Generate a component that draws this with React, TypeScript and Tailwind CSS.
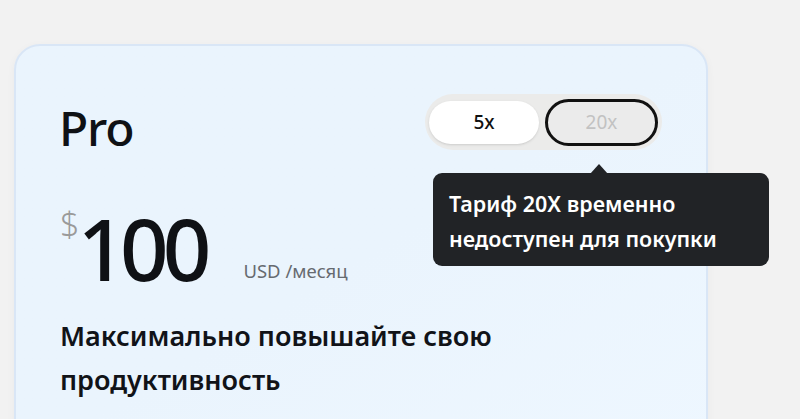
export default function App() {
  return (
    <div
      className="w-[800px] h-[419px] overflow-hidden bg-[#f2f2f2] pt-[44px] pl-[14px]"
      style={{ fontFamily: '"Noto Sans", "Open Sans", sans-serif' }}
    >
      <div className="relative w-[694px] h-[420px] rounded-[26px] border-2 border-[#d9e6f6] bg-gradient-to-br from-[#eaf4fd] via-[#eaf4fd] to-[#eef7ff] shadow-[0_2px_8px_rgba(0,0,0,0.04)] pl-[44px] pt-[52px]">
        <div className="text-[48px] leading-[60px] font-medium text-[#0f1115] tracking-tight -ml-[1px]">Pro</div>

        <div className="absolute left-[409px] top-[48px] flex items-center gap-[6px] rounded-full bg-[#ebebea] p-[4px] pr-[4px] h-[56px]">
          <div className="w-[110px] h-[43px] rounded-full bg-white shadow-sm flex items-center justify-center text-[19px] font-medium text-[#111]">5x</div>
          <div className="w-[113px] h-[47px] rounded-full border-[3px] border-[#111] bg-[#ebebeb] flex items-center justify-center text-[19px] text-[#c2c2c2]">20x</div>
        </div>

        <div className="absolute left-[417px] top-[127px] w-[336px] h-[93px] rounded-[9px] bg-[#212326] px-[16px] pt-[13px] text-white text-[21.5px] font-semibold leading-[35px]">
          <div className="absolute left-[157px] -top-[9px] w-0 h-0 border-l-[9px] border-r-[9px] border-b-[10px] border-l-transparent border-r-transparent border-b-[#212326]"></div>
          <div>Тариф 20X временно</div>
          <div>недоступен для покупки</div>
        </div>

        <div className="mt-[44px] flex items-end h-[90px]">
          <span className="self-start mt-[2px] text-[34px] leading-[40px] text-[#9a9a9a] font-light tracking-[-0.06em]">$</span>
          <span className="text-[85px] leading-[88px] font-medium text-[#0f1115] tracking-[-0.07em]">100</span>
          <span className="ml-[38px] mb-[10px] text-[18.5px] leading-[22px] text-[#666a70]">USD /месяц</span>
        </div>

        <div className="mt-[22px] text-[27px] leading-[44px] font-semibold text-[#111318] w-[500px]">
          Максимально повышайте свою продуктивность
        </div>
      </div>
    </div>
  );
}
